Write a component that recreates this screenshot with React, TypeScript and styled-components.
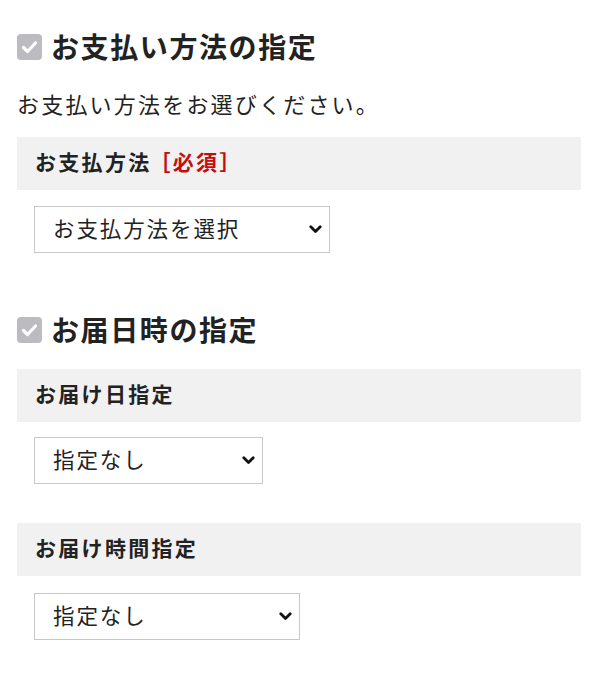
import React from "react";
import styled, { createGlobalStyle } from "styled-components";

const Global = createGlobalStyle`
  html, body { margin: 0; padding: 0; background: #fff; }
  body {
    font-family: "Noto Sans CJK JP", "Noto Sans", sans-serif;
    color: #222;
  }
`;

const Page = styled.div`
  padding: 28px 18px 30px 17px;
  display: flex;
  flex-direction: column;
`;

const Section = styled.section<{ $top?: number }>`
  display: flex;
  flex-direction: column;
  margin-top: ${(p) => p.$top ?? 0}px;
`;

const Heading = styled.h2`
  margin: 0;
  height: 38px;
  display: flex;
  align-items: center;
  gap: 9px;
  font-size: 28px;
  font-weight: 700;
  letter-spacing: 1.6px;
  line-height: 38px;
`;

const HeadingText = styled.span`
  position: relative;
  top: -1px;
`;

const CheckIcon = styled.svg`
  width: 25px;
  height: 26px;
  flex: none;
`;

const Description = styled.p`
  margin: 22px 0 0 0;
  font-size: 22px;
  line-height: 30px;
  letter-spacing: 2.2px;
`;

const Bar = styled.div<{ $top: number }>`
  margin-top: ${(p) => p.$top}px;
  height: 53px;
  box-sizing: border-box;
  background: #f1f1f1;
  display: flex;
  align-items: center;
  padding: 0 0 5px 18px;
  font-size: 21px;
  font-weight: 700;
  letter-spacing: 2.3px;
`;

const Required = styled.span`
  color: #c40d0d;
  margin-left: -2px;
`;

const SelectWrap = styled.div<{ $top: number; $w: number }>`
  position: relative;
  margin: ${(p) => p.$top}px 0 0 17px;
  width: ${(p) => p.$w}px;
  height: 47px;
`;

const Select = styled.select`
  appearance: none;
  -webkit-appearance: none;
  width: 100%;
  height: 100%;
  box-sizing: border-box;
  border: 1px solid #c8c8c8;
  border-radius: 0;
  background: #fff;
  padding: 0 0 5px 18px;
  font-family: "Noto Sans CJK JP", "Noto Sans", sans-serif;
  font-size: 21.5px;
  letter-spacing: 1.9px;
  color: #222;
  outline: none;
`;

const Chevron = styled.svg`
  position: absolute;
  right: 8px;
  top: 50%;
  width: 13px;
  height: 9px;
  margin-top: -5px;
  pointer-events: none;
`;

function Check() {
  return (
    <CheckIcon viewBox="0 0 25 26">
      <rect x="0" y="0" width="25" height="26" rx="4" fill="#bcbcc0" />
      <path
        d="M6.5 13.5 L10.5 17.5 L18.5 9"
        fill="none"
        stroke="#fff"
        strokeWidth="3.2"
        strokeLinecap="round"
        strokeLinejoin="round"
      />
    </CheckIcon>
  );
}

function DropDown({ top, width, options }: { top: number; width: number; options: string[] }) {
  return (
    <SelectWrap $top={top} $w={width}>
      <Select defaultValue={options[0]}>
        {options.map((o) => (
          <option key={o} value={o}>
            {o}
          </option>
        ))}
      </Select>
      <Chevron viewBox="0 0 13 9">
        <path
          d="M1.8 1.8 L6.5 6.5 L11.2 1.8"
          fill="none"
          stroke="#111"
          strokeWidth="2.8"
          strokeLinecap="round"
          strokeLinejoin="round"
        />
      </Chevron>
    </SelectWrap>
  );
}

export default function App() {
  return (
    <>
      <Global />
      <Page>
        <Section>
          <Heading>
            <Check />
            <HeadingText>お支払い方法の指定</HeadingText>
          </Heading>
          <Description>お支払い方法をお選びください。</Description>
          <Bar $top={19}>
            お支払方法<Required>［必須］</Required>
          </Bar>
          <DropDown top={16} width={296} options={["お支払方法を選択", "クレジットカード", "代金引換"]} />
        </Section>
        <Section $top={58}>
          <Heading>
            <Check />
            <HeadingText>お届日時の指定</HeadingText>
          </Heading>
          <Bar $top={20}>お届け日指定</Bar>
          <DropDown top={15} width={229} options={["指定なし"]} />
          <Bar $top={39}>お届け時間指定</Bar>
          <DropDown top={17} width={266} options={["指定なし", "午前中", "14時～16時"]} />
        </Section>
      </Page>
    </>
  );
}
